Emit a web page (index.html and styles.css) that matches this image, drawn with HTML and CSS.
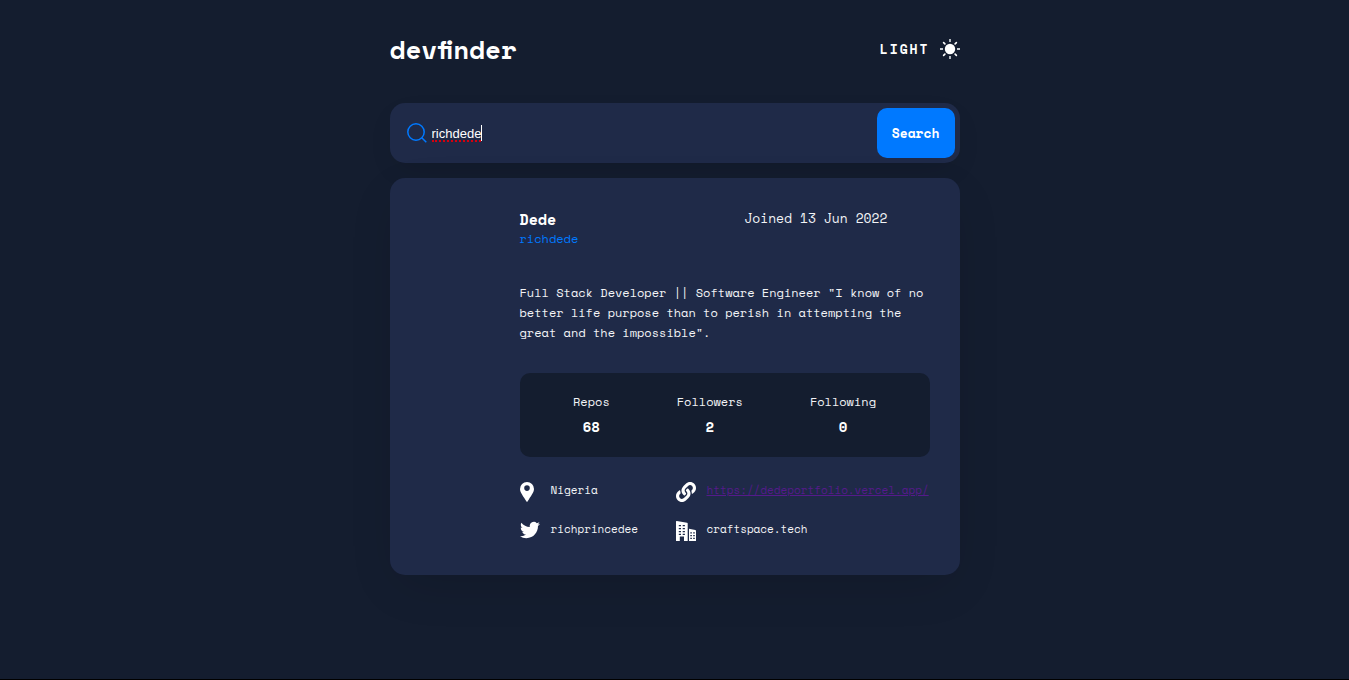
FILE: index.html
```html
<!DOCTYPE html>
<html lang="en">
<head>
<meta charset="utf-8">
<meta name="viewport" content="width=device-width, initial-scale=1">
<title>devfinder</title>
<link rel="stylesheet" href="styles.css">
</head>
<body>
<main class="container">
  <header class="header">
    <h1 class="logo">devfinder</h1>
    <button class="theme" type="button">
      <span>LIGHT</span>
      <svg width="20" height="20" viewBox="0 0 20 20" aria-hidden="true">
        <circle cx="10" cy="10" r="5.200" fill="#fff"/>
        <path d="M10 0v3M10 17v3M0 10h3M17 10h3" stroke="#c4c9cf" stroke-width="1.800"/>
        <path d="M3.600 3.600l1.300 1.300M15.100 15.100l1.300 1.300M3.600 16.400l1.300-1.300M15.100 4.900l1.300-1.300" stroke="#fff" stroke-width="1.600" stroke-linecap="round"/>
      </svg>
    </button>
  </header>

  <form class="search">
    <label class="search-label" for="username" aria-label="GitHub username">
      <svg width="20" height="20" viewBox="0 0 20 20" fill="none" stroke="#0079ff" stroke-width="1.500" aria-hidden="true">
        <circle cx="9" cy="9" r="8.200"/>
        <path d="M14.800 14.800l4.500 4.500"/>
      </svg>
    </label>
    <div class="search-field">
      <div class="spelling">
        <input class="search-input" id="username" type="text" value="richdede" autocomplete="off" spellcheck="false">
      </div>
    </div>
    <button class="search-button" type="button">Search</button>
  </form>

  <section class="card">
    <div class="avatar"></div>
    <div class="profile">
      <div class="intro">
        <div>
          <h2 class="name">Dede</h2>
          <a class="handle" href="#richdede">richdede</a>
        </div>
        <p class="joined">Joined 13 Jun 2022</p>
      </div>
      <p class="bio">Full Stack Developer || Software Engineer "I know of no better life purpose than to perish in attempting the great and the impossible".</p>
      <dl class="stats">
        <div class="stat"><dt>Repos</dt><dd>68</dd></div>
        <div class="stat"><dt>Followers</dt><dd>2</dd></div>
        <div class="stat"><dt>Following</dt><dd>0</dd></div>
      </dl>
      <ul class="details">
        <li class="detail">
          <svg width="14" height="20" viewBox="0 0 14 20" aria-hidden="true"><path fill="#fff" fill-rule="evenodd" d="M7 0a7 7 0 0 0-7 7c0 3.500 3.500 7.400 5 10.200L6.500 19.600q.5.700 1 0L9 17.200C10.500 14.400 14 10.500 14 7a7 7 0 0 0-7-7zm0 3.300a2.800 2.800 0 1 1 0 5.600 2.800 2.800 0 0 1 0-5.600z"/></svg>
          <span>Nigeria</span>
        </li>
        <li class="detail">
          <svg width="20" height="20" viewBox="0 0 512 512" aria-hidden="true"><path fill="#fff" d="M326.612 185.391c59.747 59.809 58.927 155.698.36 214.59-.11.12-.24.25-.36.37l-67.2 67.2c-59.27 59.27-155.699 59.262-214.96 0-59.27-59.26-59.27-155.7 0-214.96l37.106-37.106c9.84-9.84 26.786-3.3 27.294 10.606.648 17.722 3.826 35.527 9.69 52.721 1.986 5.822.567 12.262-3.783 16.612l-13.087 13.087c-28.026 28.026-28.905 73.66-1.155 101.96 28.024 28.579 74.086 28.749 102.325.51l67.2-67.19c28.191-28.191 28.073-73.757 0-101.83-3.701-3.694-7.429-6.564-10.341-8.569a16.037 16.037 0 0 1-6.947-12.606c-.396-10.567 3.348-21.456 11.698-29.806l21.054-21.055c5.521-5.521 14.182-6.199 20.584-1.731a152.482 152.482 0 0 1 20.522 17.197zM467.547 44.449c-59.261-59.262-155.69-59.27-214.96 0l-67.2 67.2c-.12.12-.25.25-.36.37-58.566 58.892-59.387 154.781.36 214.59a152.454 152.454 0 0 0 20.521 17.196c6.402 4.468 15.064 3.789 20.584-1.731l21.054-21.055c8.35-8.35 12.094-19.239 11.698-29.806a16.037 16.037 0 0 0-6.947-12.606c-2.912-2.005-6.64-4.875-10.341-8.569-28.073-28.073-28.191-73.639 0-101.83l67.2-67.19c28.239-28.239 74.3-28.069 102.325.51 27.75 28.3 26.872 73.934-1.155 101.96l-13.087 13.087c-4.35 4.35-5.769 10.79-3.783 16.612 5.864 17.194 9.042 34.999 9.69 52.721.509 13.906 17.454 20.446 27.294 10.606l37.106-37.106c59.271-59.259 59.271-155.699.001-214.959z"/></svg>
          <a class="site" href="#portfolio">https://dedeportfolio.vercel.app/</a>
        </li>
        <li class="detail">
          <svg width="20" height="18" viewBox="0 2 24 20" aria-hidden="true"><path fill="#fff" d="M23.953 4.57a10 10 0 01-2.825.775 4.958 4.958 0 002.163-2.723c-.951.555-2.005.959-3.127 1.184a4.92 4.92 0 00-8.384 4.482C7.69 8.095 4.067 6.13 1.64 3.162a4.822 4.822 0 00-.666 2.475c0 1.71.87 3.213 2.188 4.096a4.904 4.904 0 01-2.228-.616v.06a4.923 4.923 0 003.946 4.827 4.996 4.996 0 01-2.212.085 4.936 4.936 0 004.604 3.417 9.867 9.867 0 01-6.102 2.105c-.39 0-.779-.023-1.17-.067a13.995 13.995 0 007.557 2.209c9.053 0 13.998-7.496 13.998-13.985 0-.21 0-.42-.015-.63A9.935 9.935 0 0024 4.59z"/></svg>
          <span>richprincedee</span>
        </li>
        <li class="detail">
          <svg width="20" height="20" viewBox="0 0 20 20" aria-hidden="true"><path fill="#fff" fill-rule="evenodd" d="M0 .6Q0 0 .8.1L11 1.700q.7.1.7.800V20H8v-4.500H3.800V20H0zM2.800 4h2.200v1.200H2.800zM6.700 4h2.200v1.200H6.700zM2.800 7h2.200v1.200H2.800zM6.700 7h2.200v1.200H6.700zM2.800 10h2.200v1.200H2.800zM6.700 10h2.200v1.200H6.700zM2.800 12.800h2.200v1.200H2.800zM6.700 12.800h2.200v1.200H6.700zM13 7.800l6.300 1.300q.7.200.7.900V20h-7zM14.300 11.200v1.200h1.600v-1.200zM17.200 11.200v1.200h1.600v-1.200zM14.300 14v1.200h1.600V14zM17.200 14v1.200h1.600V14zM14.300 16.800V18h1.600v-1.200zM17.200 16.800V18h1.600v-1.200z"/></svg>
          <span>craftspace.tech</span>
        </li>
      </ul>
    </div>
  </section>
</main>
</body>
</html>
```
FILE: styles.css
```css
* {
  box-sizing: border-box;
  margin: 0;
  padding: 0;
}

body {
  min-height: 100vh;
  border-bottom: 1px solid #000;
  background: #141d2f;
  color: #fff;
  font-family: "Space Mono", "DejaVu Sans Mono", monospace;
  font-size: 12px;
  line-height: 20px;
}

button,
input {
  border: 0;
  background: none;
  color: inherit;
  font-family: inherit;
}

.container {
  max-width: 570px;
  margin: 0 auto;
  padding: 30px 0;
}

.header {
  display: flex;
  align-items: center;
  justify-content: space-between;
  height: 38px;
  margin-bottom: 35px;
}

.logo {
  font-size: 26px;
  line-height: 38px;
  font-variant-ligatures: common-ligatures discretionary-ligatures;
}

.theme {
  display: flex;
  align-items: center;
  gap: 10px;
  font-size: 13px;
  font-weight: 700;
  letter-spacing: 2px;
}

.search {
  display: flex;
  align-items: center;
  height: 60px;
  margin-bottom: 15px;
  padding: 5px 5px 5px 17px;
  border-radius: 15px;
  background: #1f2a48;
  box-shadow: 0 10px 30px -10px rgba(0, 0, 0, 0.15);
}

.search-label {
  display: flex;
}

.search-field {
  display: flex;
  flex: 1;
  padding-left: 5px;
}

.spelling {
  display: flex;
  position: relative;
}

.spelling::after {
  content: "";
  position: absolute;
  right: 1px;
  bottom: -1px;
  left: 0;
  border-bottom: 2px dotted #d4000f;
}

.search-input {
  field-sizing: content;
  height: 16px;
  border-right: 1px solid #fff;
  outline: none;
  font-family: "Liberation Sans", Arial, sans-serif;
  font-size: 13px;
}

.search-button {
  height: 50px;
  padding: 0 15px;
  border-radius: 10px;
  background: #0079ff;
  font-size: 13px;
  font-weight: 700;
}

.card {
  display: grid;
  grid-template-columns: 70px 1fr;
  gap: 30px;
  padding: 30px 30px 34px;
  border-radius: 15px;
  background: #1f2a48;
  box-shadow: 0 15px 50px -10px rgba(0, 0, 0, 0.15);
}

.intro {
  display: flex;
  justify-content: space-between;
  margin-bottom: 35px;
  padding-right: 42px;
}

.name {
  font-size: 15px;
  line-height: 22px;
}

.handle {
  display: block;
  color: #0079ff;
  line-height: 18px;
  text-decoration: none;
}

.joined {
  font-size: 13px;
  color: #f2f3f6;
}

.bio {
  margin-bottom: 30px;
  color: #f2f3f6;
}

.stats {
  display: flex;
  justify-content: space-around;
  margin-bottom: 25px;
  padding: 16px 20px 18px;
  border-radius: 10px;
  background: #141d2f;
  line-height: 25px;
  text-align: center;
}

.stat dt {
  color: #f2f3f6;
}

.stat dd {
  font-size: 14px;
  font-weight: 700;
}

.details {
  display: grid;
  grid-template-columns: 126px 1fr;
  gap: 19px 30px;
  font-size: 11px;
  line-height: 16px;
  list-style: none;
}

.detail {
  display: grid;
  grid-template-columns: 21px 1fr;
  gap: 10px;
  height: 20px;
  color: #f2f3f6;
}

.site {
  color: #551a8b;
}
```
